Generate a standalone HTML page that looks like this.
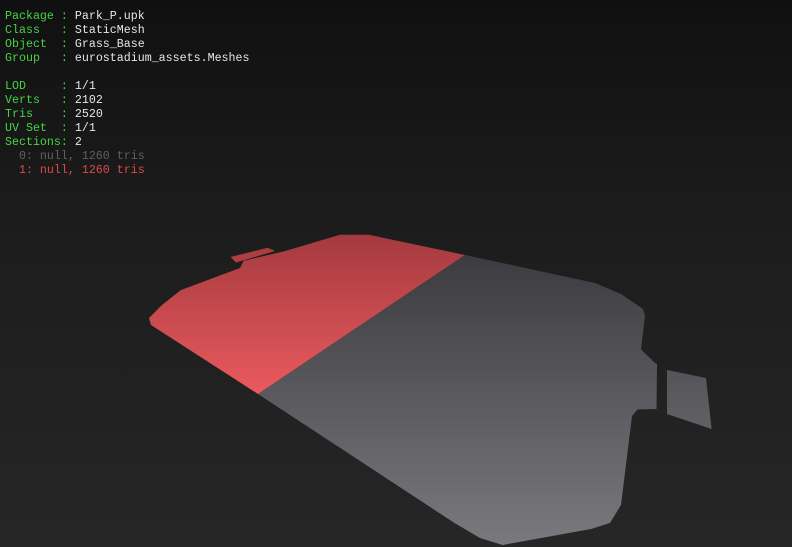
<!DOCTYPE html>
<html><head><meta charset="utf-8"><style>
html,body{margin:0;padding:0;}
body{width:792px;height:547px;overflow:hidden;background:linear-gradient(#101010,#1c1c1c 40%,#262626);position:relative;font-family:"Liberation Mono",monospace;}
pre{position:absolute;left:5px;top:10px;margin:0;font-size:11.65px;line-height:14px;color:#e6e6e6;font-family:"Liberation Mono",monospace;}
.g{color:#44d444}.d{color:#606060}.r{color:#dc4a4a}
svg{position:absolute;left:0;top:0}
</style></head><body>
<svg width="792" height="547">
<defs>
<linearGradient id="rg" x1="0" y1="235" x2="0" y2="394" gradientUnits="userSpaceOnUse"><stop offset="0" stop-color="#a43a3e"/><stop offset="1" stop-color="#ea5a5e"/></linearGradient>
<linearGradient id="gg" x1="0" y1="255" x2="0" y2="545" gradientUnits="userSpaceOnUse"><stop offset="0" stop-color="#3c3c40"/><stop offset="1" stop-color="#7a7a7e"/></linearGradient>
</defs>
<polygon fill="url(#rg)" points="258,394 151,325 149,318 162,305 181,290 240,268 243.6,260.7 284,251.4 340,234.8 369,234.8 465,255"/>
<polygon fill="url(#rg)" points="230.6,257 267.6,247.7 275,251 236,262.5"/>
<polygon fill="url(#gg)" points="465,255 595,283 621,294 643,309 645,316 641,349.5 654,362 657,364 656.5,409 637.6,409.4 632,416 621,505 610,523 591,529 502.6,545 480,538 454.5,523 258,394"/>
<polygon fill="url(#gg)" points="667,370 706,378 711.6,429 667,414"/>
</svg>
<pre><span class="g">Package :</span> Park_P.upk
<span class="g">Class   :</span> StaticMesh
<span class="g">Object  :</span> Grass_Base
<span class="g">Group   :</span> eurostadium_assets.Meshes

<span class="g">LOD     :</span> 1/1
<span class="g">Verts   :</span> 2102
<span class="g">Tris    :</span> 2520
<span class="g">UV Set  :</span> 1/1
<span class="g">Sections:</span> 2
<span class="d">  0: null, 1260 tris</span>
<span class="r">  1: null, 1260 tris</span></pre>
</body></html>
